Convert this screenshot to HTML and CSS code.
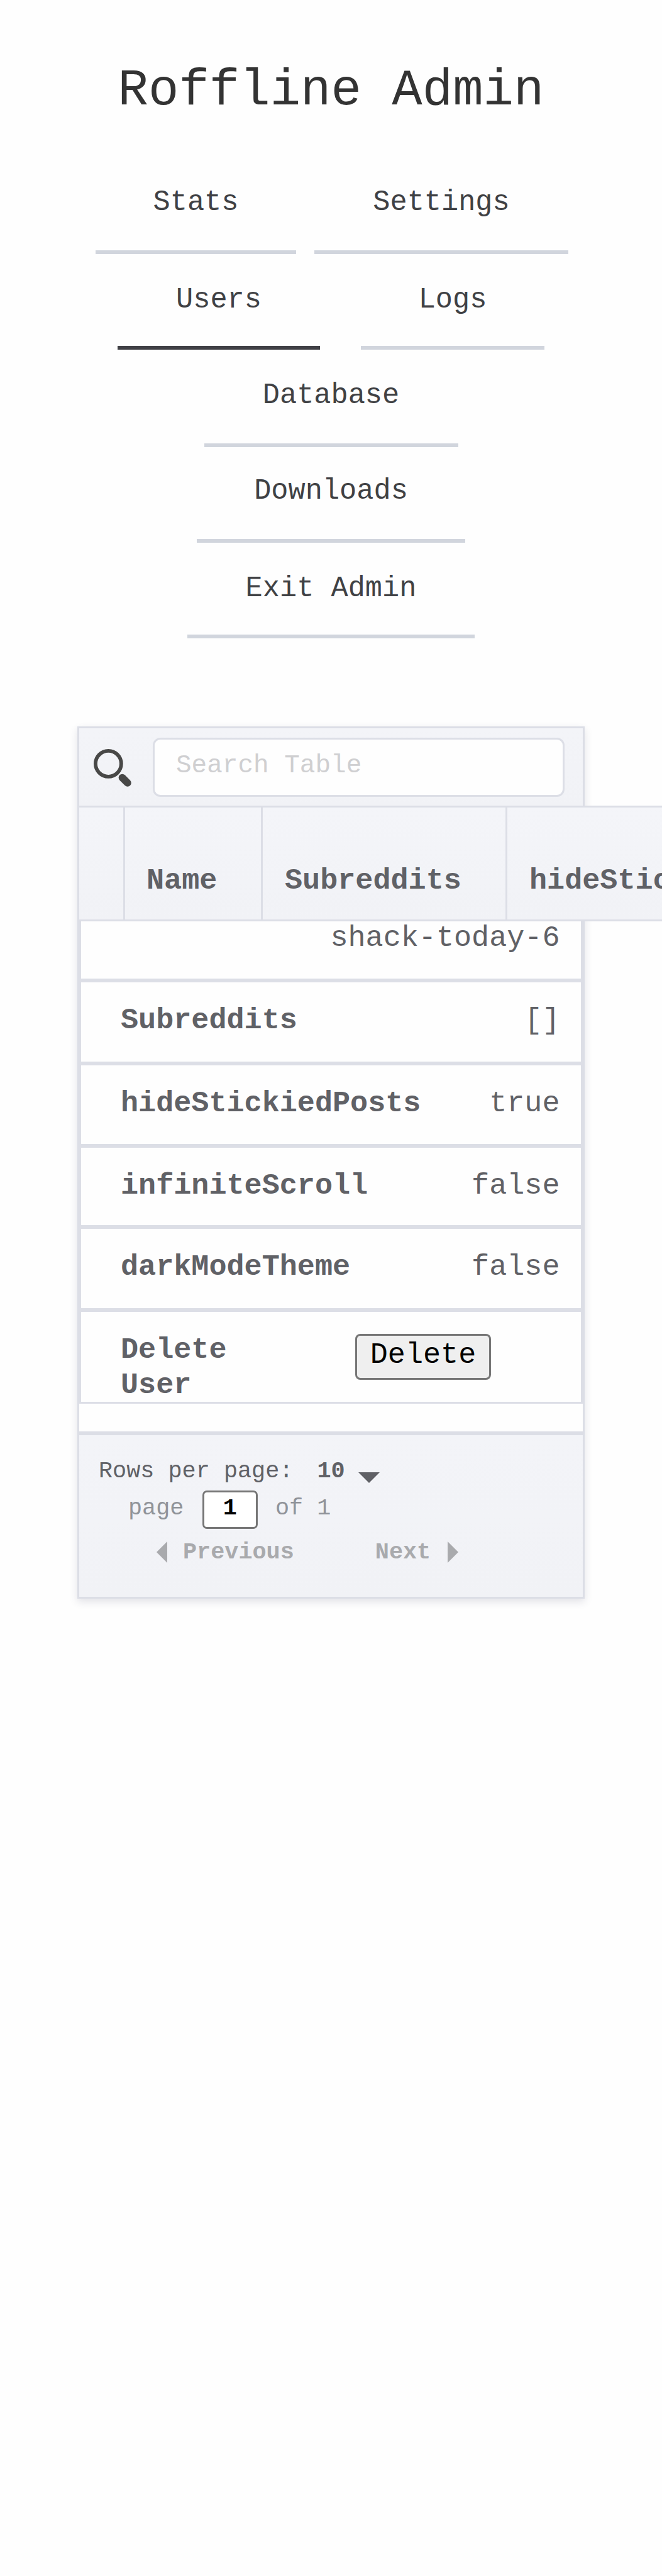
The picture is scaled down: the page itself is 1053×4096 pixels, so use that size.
FILE: index.html
```html
<!DOCTYPE html>
<html lang="en">
<head>
<meta charset="utf-8">
<title>Roffline Admin</title>
<link rel="stylesheet" href="styles.css">
</head>
<body>
<h1 class="title">Roffline Admin</h1>
<nav class="nav">
  <div class="nav-row first"><a class="tab stats">Stats</a><a class="tab settings">Settings</a></div>
  <div class="nav-row second"><a class="tab users active">Users</a><a class="tab logs">Logs</a></div>
  <div class="nav-row third"><a class="tab database">Database</a></div>
  <div class="nav-row fourth"><a class="tab downloads">Downloads</a></div>
  <div class="nav-row fifth"><a class="tab exit">Exit Admin</a></div>
</nav>
<main class="card">
  <div class="search">
    <svg class="search-icon" width="62" height="62" viewBox="0 0 63.6 63.6">
      <circle cx="25" cy="25" r="21" fill="none" stroke="#484847" stroke-width="6"/>
      <path d="M47.7 47.7L56.3 56.3" stroke="#484847" stroke-width="12" stroke-linecap="round"/>
    </svg>
    <div class="search-input">Search Table</div>
  </div>
  <div class="head">
    <div class="th blank"></div>
    <div class="th name">Name</div>
    <div class="th subs">Subreddits</div>
    <div class="th rest">hideStickiedPosts</div>
  </div>
  <div class="rows">
    <div class="row partial"><span></span><span>shack-today-6</span></div>
    <div class="row"><b>Subreddits</b><span>[]</span></div>
    <div class="row r3"><b>hideStickiedPosts</b><span>true</span></div>
    <div class="row r4"><b>infiniteScroll</b><span>false</span></div>
    <div class="row"><b>darkModeTheme</b><span>false</span></div>
    <div class="row last"><b>Delete<br>User</b><button class="delete">Delete</button></div>
  </div>
  <footer class="foot">
    <div class="per-page"><span>Rows per page:</span><b>10</b><i class="tri down"></i></div>
    <div class="page"><span>page</span><b class="page-input">1</b><span>of 1</span></div>
    <div class="pager"><i class="tri left"></i><b>Previous</b><b class="next">Next</b><i class="tri right"></i></div>
  </footer>
</main>
</body>
</html>
```

FILE: styles.css
```css
* { box-sizing: border-box; }
html { background: #fefefe; overflow: hidden; }
body {
  margin: 0;
  height: 4096px;
  overflow: hidden;
  font-family: "Liberation Mono", monospace;
  font-size: 46.8px;
  color: #606166;
}
.title {
  margin: 0;
  padding-top: 97px;
  height: 277px;
  font-size: 80.7px;
  font-weight: 400;
  line-height: 96px;
  text-align: center;
  color: #333;
}
.nav { display: flex; flex-direction: column; height: 878px; }
.nav-row { display: flex; justify-content: center; height: 152px; }
.nav-row.first { height: 127px; gap: 29px; margin-left: 3px; }
.nav-row.second { gap: 65px; }
.nav-row.third { height: 155px; }
.tab {
  display: block;
  align-self: flex-end;
  height: 108px;
  border-bottom: 6px solid #d1d5dd;
  font-size: 45.3px;
  line-height: 52px;
  text-align: center;
  color: #404144;
}
.tab.active { border-color: #404045; }
.stats { width: 319px; }
.settings { width: 404px; }
.users { width: 322px; height: 105px; }
.logs { width: 292px; height: 105px; }
.database { width: 404px; }
.downloads { width: 427px; }
.exit { width: 457px; height: 105px; }
.card {
  width: 807px;
  height: 1387px;
  margin-left: 123px;
  border: 3px solid #dcdee6;
  background: #fefefe;
  box-shadow: 0 5px 12px rgba(60, 60, 90, .14);
}
.search {
  display: flex;
  align-items: flex-start;
  height: 123px;
  padding: 15px 0 0 22px;
  background: linear-gradient(#f3f4f8, #f1f2f6);
}
.search-icon { flex: none; margin-top: 17px; }
.search-input {
  width: 655px;
  height: 94px;
  margin-left: 33px;
  padding-left: 34px;
  border: 3px solid #dcdee6;
  border-radius: 12px;
  background: #fefefe;
  font-size: 41px;
  line-height: 83px;
  color: #cfcfd1;
}
.head {
  position: relative;
  display: flex;
  width: 927px;
  height: 184px;
  overflow: hidden;
  border: solid #dcdee6;
  border-width: 3px 0;
  background: linear-gradient(#f4f5f9, #f1f2f6);
  font-weight: 700;
  line-height: 56px;
}
.th { flex: none; padding: 89px 0 0 35px; border-right: 3px solid #dcdee6; }
.blank { width: 73px; }
.name { width: 219px; padding-left: 34px; }
.subs { width: 389px; }
.rest { border: 0; }
.row {
  display: flex;
  justify-content: space-between;
  height: 132px;
  padding: 33px 33.5px 0 63px;
  border: 3px solid #dcdee6;
  line-height: 55.6px;
}
.partial { height: 94px; padding-top: 0; border-top: 0; line-height: 53px; }
.r3 { height: 131px; }
.r4 { height: 129px; }
.last { height: 149px; overflow: hidden; }
.delete {
  width: 216px;
  height: 73px;
  margin: 2px 109.5px 0 0;
  padding: 0 0 5px;
  border: 3px solid #767676;
  border-radius: 8px;
  background: #efefef;
  color: #000;
  font: 46.8px/60px "Liberation Mono", monospace;
}
.foot {
  height: 263px;
  margin-top: 44px;
  padding-left: 31px;
  border-top: 6px solid #dcdee6;
  background: linear-gradient(#f3f4f8, #f1f2f6);
  font-size: 36.85px;
}
.per-page { display: flex; padding-top: 35px; height: 88px; line-height: 44px; }
.per-page b { margin-left: 38px; }
.tri { border: 17.5px solid transparent; width: 0; height: 0; }
.down { margin: 23.5px 0 0 21px; border-top-color: #606166; border-bottom: 0; }
.page { display: flex; height: 61px; padding-left: 47px; line-height: 56px; color: #909399; }
.page-input {
  width: 88px;
  height: 61px;
  margin: 0 28px 0 29.5px;
  border: 3px solid #767676;
  border-radius: 7px;
  background: #fff;
  text-align: center;
  line-height: 50px;
  color: #000;
}
.pager { display: flex; padding: 15px 0 0 92px; line-height: 44px; color: #a9aaad; }
.pager .tri { margin-top: 5px; }
.left { border-right-color: #a9aaad; border-left: 0; }
.pager b { margin-left: 25px; }
.pager .next { margin: 0 27px 0 129px; }
.right { border-left-color: #a9aaad; border-right: 0; }
```
